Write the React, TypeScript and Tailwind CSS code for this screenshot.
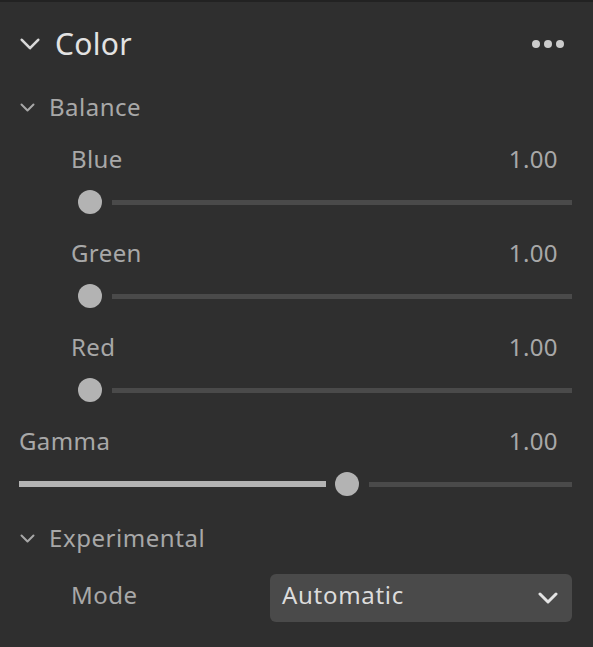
import React from "react";

const font = { fontFamily: '"Noto Sans", "Open Sans", sans-serif' };

function Chevron({ w, h, stroke, color }: { w: number; h: number; stroke: number; color: string }) {
  return (
    <svg width={w} height={h} viewBox={`0 0 ${w} ${h}`} fill="none">
      <path
        d={`M ${stroke / 2 + 0.5} ${stroke / 2 + 0.5} L ${w / 2} ${h - stroke / 2 - 0.5} L ${w - stroke / 2 - 0.5} ${stroke / 2 + 0.5}`}
        stroke={color}
        strokeWidth={stroke}
        strokeLinecap="round"
        strokeLinejoin="round"
      />
    </svg>
  );
}

function NestedSlider({ label, value }: { label: string; value: string }) {
  return (
    <div className="flex flex-col">
      <div className="flex justify-between pl-[71px] pr-[35px] h-[32px] leading-[32px] text-[24px] tracking-[0.4px] text-[#a8a8a8]">
        <span>{label}</span>
        <span>{value}</span>
      </div>
      <div className="flex items-center h-[24px] mt-[15px] pl-[78px] pr-[21px]">
        <div className="w-[24px] h-[24px] rounded-full bg-[#b3b3b3] shrink-0" />
        <div className="ml-[10px] flex-1 h-[5px] bg-[#4a4a4a]" />
      </div>
    </div>
  );
}

export default function App() {
  return (
    <div style={font} className="w-[593px] h-[647px] bg-[#2f2f2f] border-t-2 border-[#222222] overflow-hidden">
      {/* Header */}
      <div className="flex items-center justify-between pt-[22px] pl-[20px] pr-[29px] h-[62px]">
        <div className="flex items-center">
          <Chevron w={20} h={12} stroke={2.6} color="#d8d8d8" />
          <span className="ml-[15px] text-[30px] leading-[40px] tracking-[0.3px] text-[#e2e2e2]">Color</span>
        </div>
        <div className="flex items-center gap-[4px]">
          <div className="w-[8px] h-[8px] rounded-full bg-[#cccccc]" />
          <div className="w-[8px] h-[8px] rounded-full bg-[#cccccc]" />
          <div className="w-[8px] h-[8px] rounded-full bg-[#cccccc]" />
        </div>
      </div>

      {/* Balance */}
      <div className="flex items-center pl-[20px] mt-[27px] h-[32px]">
        <Chevron w={15} h={9} stroke={2} color="#a8a8a8" />
        <span className="ml-[14px] text-[24px] leading-[32px] tracking-[0.5px] text-[#a8a8a8]">Balance</span>
      </div>

      <div className="flex flex-col gap-[23px] mt-[20px]">
        <NestedSlider label="Blue" value="1.00" />
        <NestedSlider label="Green" value="1.00" />
        <NestedSlider label="Red" value="1.00" />
      </div>

      {/* Gamma */}
      <div className="flex flex-col mt-[23px]">
        <div className="flex justify-between pl-[19px] pr-[35px] h-[32px] leading-[32px] text-[24px] tracking-[0.4px] text-[#a8a8a8]">
          <span>Gamma</span>
          <span>1.00</span>
        </div>
        <div className="flex items-center h-[24px] mt-[15px] pl-[19px] pr-[21px]">
          <div className="w-[307px] h-[6px] bg-[#b3b3b3] shrink-0" />
          <div className="ml-[9px] w-[24px] h-[24px] rounded-full bg-[#b3b3b3] shrink-0" />
          <div className="ml-[10px] flex-1 h-[5px] bg-[#4a4a4a]" />
        </div>
      </div>

      {/* Experimental */}
      <div className="flex items-center pl-[20px] mt-[26px] h-[32px]">
        <Chevron w={15} h={9} stroke={2} color="#a8a8a8" />
        <span className="ml-[14px] text-[24px] leading-[32px] tracking-[0.55px] text-[#a8a8a8]">Experimental</span>
      </div>

      {/* Mode */}
      <div className="flex items-center justify-between pl-[71px] pr-[21px] mt-[20px]">
        <span className="text-[24px] leading-[32px] tracking-[0.5px] text-[#a8a8a8] mb-[6px]">Mode</span>
        <div className="w-[302px] h-[48px] rounded-[6px] bg-[#4a4a4a] flex items-center justify-between pl-[12px] pr-[14px]">
          <span className="text-[24px] leading-[32px] tracking-[0.7px] text-[#dcdcdc] mb-[6px]">Automatic</span>
          <Chevron w={20} h={12} stroke={3} color="#e4e4e4" />
        </div>
      </div>
    </div>
  );
}
